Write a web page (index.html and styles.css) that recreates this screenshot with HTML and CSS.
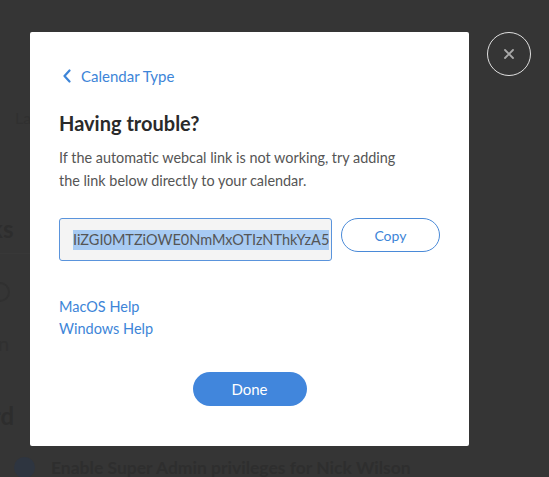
FILE: index.html
```html
<!DOCTYPE html>
<html>
<head>
<meta charset="utf-8">
<link rel="stylesheet" href="styles.css">
</head>
<body>
<div class="page">
  <div class="bg-label">La</div>
  <div class="bg-heading bg-links">Links</div>
  <div class="bg-rule"></div>
  <div class="bg-icon-row"><span class="bg-ring"></span></div>
  <div class="bg-row">n</div>
  <div class="bg-heading bg-board">Dashboard</div>
  <div class="bg-item"><span class="bg-shield"></span><span class="bg-item-text">Enable Super Admin privileges for Nick Wilson</span></div>
</div>

<div class="overlay">
  <div class="modal">
    <a class="back" href="#">
      <svg class="chev" width="10" height="14" viewBox="0 0 10 14"><path d="M7.5 1.5 L2.5 7 L7.5 12.5" fill="none" stroke="#3d85d8" stroke-width="2.2" stroke-linecap="round" stroke-linejoin="round"/></svg>
      <span>Calendar Type</span>
    </a>
    <h1 class="title">Having trouble?</h1>
    <p class="desc">If the automatic webcal link is not working, try adding the link below directly to your calendar.</p>
    <div class="link-row">
      <div class="link-field"><span class="sel">IiZGI0MTZiOWE0NmMxOTIzNThkYzA5</span></div>
      <button class="copy">Copy</button>
    </div>
    <div class="help">
      <a href="#">MacOS Help</a>
      <a href="#">Windows Help</a>
    </div>
    <div class="actions"><button class="done">Done</button></div>
  </div>
  <button class="close" aria-label="Close">
    <svg width="12" height="12" viewBox="0 0 12 12"><path d="M2 2 L10 10 M10 2 L2 10" stroke="#a9a9a9" stroke-width="1.8" stroke-linecap="round"/></svg>
  </button>
</div>
</body>
</html>
```

FILE: styles.css
```css
html, body {
  margin: 0;
  padding: 0;
}
body {
  width: 549px;
  height: 477px;
  overflow: hidden;
  background: #353535;
  font-family: Lato, "Liberation Sans", sans-serif;
}
.page {
  display: flex;
  flex-direction: column;
  color: #2c2c2c;
}
.bg-label {
  margin: 108px 0 0 15px;
  font-size: 16px;
  color: #303030;
}
.bg-heading {
  font-weight: 700;
  font-size: 24px;
  color: #2d2d2d;
  white-space: nowrap;
}
.bg-links {
  margin: 87px 0 0 -42px;
}
.bg-rule {
  margin-top: 10px;
  height: 1px;
  width: 30px;
  background: #383838;
}
.bg-icon-row {
  margin: 28px 0 0 -10px;
}
.bg-ring {
  display: block;
  width: 16px;
  height: 16px;
  border: 2px solid #303030;
  border-radius: 50%;
}
.bg-row {
  margin: 29px 0 0 -2px;
  font-size: 20px;
  color: #303030;
}
.bg-board {
  margin: 46px 0 0 -102px;
}
.bg-item {
  display: flex;
  align-items: center;
  gap: 16px;
  margin: 27px 0 0 14px;
}
.bg-shield {
  width: 21px;
  height: 21px;
  border-radius: 50%;
  background: #2e3540;
  flex: none;
}
.bg-item-text {
  font-weight: 700;
  font-size: 17.5px;
  color: #2e2e2e;
  white-space: nowrap;
}

.overlay {
  position: fixed;
  inset: 0;
}
.modal {
  position: absolute;
  left: 30px;
  top: 32px;
  width: 439px;
  height: 414px;
  box-sizing: border-box;
  background: #fff;
  border-radius: 2px;
  padding: 34px 29px 0 29px;
  display: flex;
  flex-direction: column;
}
.back {
  display: flex;
  align-items: center;
  gap: 9px;
  color: #3d85d8;
  text-decoration: none;
  font-size: 15px;
  height: 20px;
  margin-left: 3px;
}
.chev { flex: none; }
.title {
  margin: 23px 0 0 0;
  font-size: 20px;
  font-weight: 700;
  color: #2a2a2a;
  line-height: 28px;
}
.desc {
  margin: 9px 0 0 0;
  font-size: 14.4px;
  line-height: 23px;
  color: #555;
  width: 350px;
}
.link-row {
  display: flex;
  align-items: flex-start;
  gap: 9px;
  margin-top: 26px;
}
.link-field {
  width: 275px;
  height: 43px;
  box-sizing: border-box;
  border: 1px solid #5a94dc;
  border-radius: 3px;
  background: #f4f4f4;
  display: flex;
  align-items: center;
  padding: 0 12px 0 13px;
  overflow: hidden;
  white-space: nowrap;
  font-size: 14.5px;
  color: #555;
}
.sel {
  background: #a8cbf3;
  line-height: 20px;
}
.copy {
  width: 100px;
  height: 34px;
  box-sizing: border-box;
  border: 1px solid #4a8ad8;
  border-radius: 17px;
  background: #fff;
  color: #3d85d8;
  font-family: inherit;
  font-size: 14px;
  padding: 0;
}
.help {
  display: flex;
  flex-direction: column;
  align-items: flex-start;
  margin-top: 36px;
  gap: 3px;
}
.help a {
  color: #3d85d8;
  text-decoration: none;
  font-size: 14.5px;
  line-height: 19px;
}
.actions {
  display: flex;
  justify-content: center;
  margin-top: 34px;
}
.done {
  width: 114px;
  height: 34px;
  border: none;
  border-radius: 17px;
  background: #4186dc;
  color: #fff;
  font-family: inherit;
  font-size: 15px;
  padding: 0;
}
.close {
  position: absolute;
  left: 487px;
  top: 32px;
  width: 44px;
  height: 44px;
  box-sizing: border-box;
  border: 1.5px solid #e0e0e0;
  border-radius: 50%;
  background: transparent;
  display: flex;
  align-items: center;
  justify-content: center;
  padding: 0;
}
```
